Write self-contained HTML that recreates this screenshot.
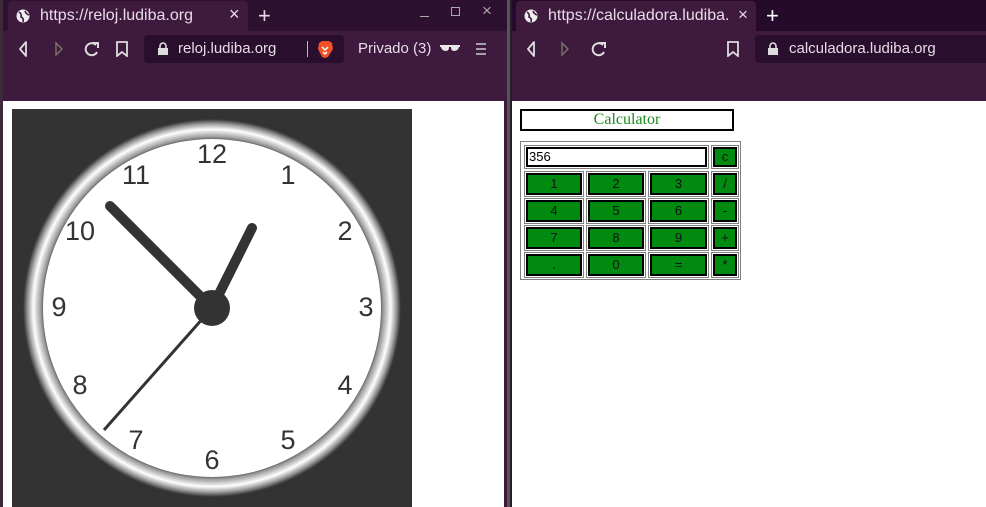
<!DOCTYPE html>
<html><head><meta charset="utf-8"><style>
*{margin:0;padding:0;box-sizing:border-box}
body{width:986px;height:507px;overflow:hidden;position:relative;background:#3c1a3c;font-family:"Liberation Sans",sans-serif}
.abs{position:absolute}
.ui{font-family:"Liberation Sans",sans-serif;color:#e8dce8;font-size:15px;white-space:nowrap}
.calc{position:absolute;left:520px;top:141px;width:221px;height:139px;border:1px solid #808080}
.cell{position:absolute;border:1px solid #808080}
.btn{position:absolute;left:1px;top:1px;right:1px;bottom:1px;background:#008a10;border:2px solid #000;font-size:13px;color:#111;text-align:center;line-height:16px}
</style></head><body>
<!-- left window -->
<div class="abs" style="left:0;top:0;width:507px;height:33px;background:#2e1031"></div>
<div class="abs" style="left:0;top:0;width:3px;height:507px;background:#3a2a3a"></div>
<div class="abs" style="left:8px;top:1px;width:240px;height:32px;background:#3e1a3f;border-radius:4px 4px 0 0"></div>
<div class="abs" style="left:3px;top:31px;width:504px;height:70px;background:#3e1a3f"></div>
<svg class="abs" style="left:16px;top:9px" width="14" height="14"><circle cx="7" cy="7" r="6.5" fill="#eee"/><path d="M3 3 Q6 5 5 8 Q8 9 7 13 M9 2 Q10 5 13 6" stroke="#3e1a3f" stroke-width="1.6" fill="none"/></svg>
<div class="abs ui" style="left:40px;top:7px;font-size:16px">https://reloj.ludiba.org</div>
<div class="abs ui" style="left:229px;top:4px;font-size:18px">×</div>
<div class="abs ui" style="left:258px;top:3px;font-size:22px">+</div>
<div class="abs" style="left:420px;top:16px;width:9px;height:1px;background:#aaa"></div>
<div class="abs" style="left:451px;top:7px;width:9px;height:9px;border:1px solid #aaa"></div>
<div class="abs ui" style="left:482px;top:1px;font-size:17px;color:#aaa">×</div>
<svg class="abs" style="left:18px;top:40px" width="100" height="18"><path d="M8 2 L2 9 L8 16 Z" stroke="#ddd" stroke-width="1.8" fill="none" stroke-linejoin="round"/><path d="M38 3 L44 9 L38 15 Z" stroke="#776" stroke-width="1.4" fill="none"/><path d="M78 5 A6 6 0 1 0 79 12" stroke="#ddd" stroke-width="2" fill="none"/><path d="M74 3 L80 3 L80 8" stroke="#ddd" stroke-width="2" fill="none"/></svg>
<svg class="abs" style="left:116px;top:41px" width="12" height="16"><path d="M1 1 H11 V15 L6 11 L1 15 Z" stroke="#ddd" stroke-width="1.8" fill="none"/></svg>
<div class="abs" style="left:144px;top:35px;width:200px;height:28px;background:#2a0e2e;border-radius:4px"></div>
<svg class="abs" style="left:157px;top:42px" width="12" height="14"><path d="M3 6 V4 A3 3 0 0 1 9 4 V6" stroke="#ddd" stroke-width="1.6" fill="none"/><rect x="1" y="6" width="10" height="7" fill="#ddd"/></svg>
<div class="abs ui" style="left:178px;top:40px">reloj.ludiba.org</div>
<div class="abs" style="left:307px;top:41px;width:1px;height:16px;background:#bbb"></div>
<svg class="abs" style="left:317px;top:40px" width="17" height="19"><path d="M2 3 L5 1 H12 L15 3 L16 9 L11 17 L8 18 L5 17 L1 9 Z" fill="#f25125"/><path d="M5 7 L8 10 L11 7 M6 12 L8 14 L10 12" stroke="#fff" stroke-width="1.5" fill="none"/></svg>
<div class="abs ui" style="left:358px;top:40px">Privado (3)</div>
<svg class="abs" style="left:440px;top:44px" width="20" height="8"><path d="M0 1 H20 V3 H19 Q18 7 14 7 Q11 7 11 3 H9 Q9 7 6 7 Q2 7 1 3 H0 Z" fill="#e8e8e8"/></svg>
<svg class="abs" style="left:476px;top:42px" width="10" height="14"><path d="M0 2H10M0 7H10M0 12H10" stroke="#ccc" stroke-width="1.6"/></svg>
<div class="abs" style="left:3px;top:101px;width:501px;height:406px;background:#fff"></div>
<div class="abs" style="left:12px;top:109px;width:400px;height:398px;background:#333"></div>
<svg class="abs" style="left:12px;top:109px" width="400" height="398">
<defs><radialGradient id="rg" cx="200" cy="199" r="189" gradientUnits="userSpaceOnUse">
<stop offset="0.89" stop-color="#555"/><stop offset="0.905" stop-color="#999"/><stop offset="0.945" stop-color="#fff"/><stop offset="0.975" stop-color="#999"/><stop offset="0.995" stop-color="#444"/><stop offset="1" stop-color="#333"/></radialGradient></defs>
<circle cx="200" cy="199" r="189" fill="url(#rg)"/>
<circle cx="200" cy="199" r="169" fill="#fff"/>
<g font-family="Liberation Sans,sans-serif" font-size="27" fill="#333" text-anchor="middle">
<text x="200" y="54">12</text><text x="276" y="75">1</text><text x="333" y="131">2</text><text x="354" y="207">3</text><text x="333" y="285">4</text><text x="276" y="340">5</text><text x="200" y="360">6</text><text x="124" y="340">7</text><text x="68" y="285">8</text><text x="47" y="207">9</text><text x="68" y="131">10</text><text x="124" y="75">11</text></g>
<line x1="200" y1="199" x2="98" y2="97" stroke="#333" stroke-width="10" stroke-linecap="round"/>
<line x1="200" y1="199" x2="240" y2="119" stroke="#333" stroke-width="10" stroke-linecap="round"/>
<line x1="200" y1="199" x2="92" y2="321" stroke="#333" stroke-width="3"/>
<circle cx="200" cy="199" r="18" fill="#333"/>
</svg>
<!-- divider -->
<div class="abs" style="left:507px;top:0;width:3px;height:507px;background:#555"></div>
<div class="abs" style="left:510px;top:0;width:2px;height:507px;background:#2a1a2a"></div>
<!-- right window -->
<div class="abs" style="left:512px;top:0;width:474px;height:33px;background:#250a2c"></div>
<div class="abs" style="left:516px;top:1px;width:240px;height:32px;background:#3e1a3f;border-radius:4px 4px 0 0"></div>
<div class="abs" style="left:512px;top:31px;width:474px;height:70px;background:#3e1a3f"></div>
<svg class="abs" style="left:524px;top:9px" width="14" height="14"><circle cx="7" cy="7" r="6.5" fill="#eee"/><path d="M3 3 Q6 5 5 8 Q8 9 7 13 M9 2 Q10 5 13 6" stroke="#3e1a3f" stroke-width="1.6" fill="none"/></svg>
<div class="abs" style="left:548px;top:7px;width:183px;overflow:hidden;white-space:nowrap"><span class="ui" style="font-size:16px">https://calculadora.ludiba.</span></div>
<div class="abs ui" style="left:738px;top:5px;font-size:17px">×</div>
<div class="abs ui" style="left:766px;top:3px;font-size:22px;color:#fff">+</div>
<svg class="abs" style="left:526px;top:40px" width="100" height="18"><path d="M8 2 L2 9 L8 16 Z" stroke="#ddd" stroke-width="1.8" fill="none" stroke-linejoin="round"/><path d="M36 3 L42 9 L36 15 Z" stroke="#776" stroke-width="1.4" fill="none"/><path d="M77 5 A6 6 0 1 0 78 12" stroke="#ddd" stroke-width="2" fill="none"/><path d="M73 3 L79 3 L79 8" stroke="#ddd" stroke-width="2" fill="none"/></svg>
<svg class="abs" style="left:727px;top:41px" width="12" height="16"><path d="M1 1 H11 V15 L6 11 L1 15 Z" stroke="#ddd" stroke-width="1.8" fill="none"/></svg>
<div class="abs" style="left:755px;top:35px;width:231px;height:28px;background:#2a0e2e;border-radius:4px 0 0 4px"></div>
<svg class="abs" style="left:767px;top:42px" width="12" height="14"><path d="M3 6 V4 A3 3 0 0 1 9 4 V6" stroke="#ddd" stroke-width="1.6" fill="none"/><rect x="1" y="6" width="10" height="7" fill="#ddd"/></svg>
<div class="abs ui" style="left:789px;top:40px">calculadora.ludiba.org</div>
<div class="abs" style="left:512px;top:101px;width:474px;height:406px;background:#fff"></div>
<div class="abs" style="left:520px;top:109px;width:214px;height:22px;border:2px solid #000;text-align:center;font-family:'Liberation Serif',serif;font-size:16px;color:#1e8a1e;line-height:18px">Calculator</div>
<div class="calc">
<div class="cell" style="left:3px;top:3px;width:185px;height:24px"><div style="position:absolute;left:1px;top:1px;right:1px;bottom:1px;border:2px solid #000;background:#fff;font-size:13px;line-height:16px;padding-left:1px">356</div></div>
<div class="cell" style="left:190px;top:3px;width:28px;height:24px"><div class="btn">c</div></div>
</div>
<script>
var L=[["1","2","3","/"],["4","5","6","-"],["7","8","9","+"],[".","0","=","*"]];
var xs=[3,65,127,190],ws=[60,60,61,28];
var c=document.querySelector('.calc'),h='';
for(var r=0;r<4;r++)for(var k=0;k<4;k++){
h+='<div class="cell" style="left:'+xs[k]+'px;top:'+(29+r*27)+'px;width:'+ws[k]+'px;height:26px"><div class="btn" style="line-height:18px">'+L[r][k]+'</div></div>';}
c.insertAdjacentHTML('beforeend',h);
</script>
</body></html>
